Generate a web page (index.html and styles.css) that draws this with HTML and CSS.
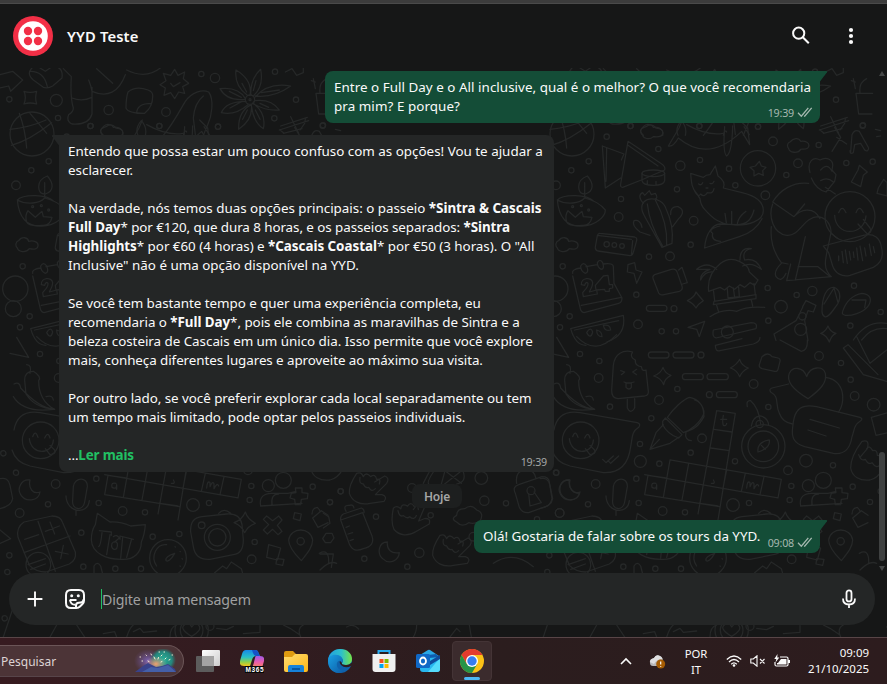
FILE: index.html
```
<!DOCTYPE html>
<html lang="pt">
<head>
<meta charset="utf-8">
<title>YYD Teste</title>
<link rel="stylesheet" href="styles.css">
</head>
<body>
<div class="window-edge"></div>
<div class="app">
<svg class="doodles" width="887" height="569" viewBox="0 68 887 569" aria-hidden="true">
  <defs>
    <g id="upper" transform="translate(550 120) scale(.33333)">
      <circle cx="66" cy="42" r="66"/><path d="M0 28Q60 22 108 0M4 76Q60 60 125 8M50 84Q46 30 28 -20M110 40Q86 10 60 -20"/>
      <path d="M157 78l65 24-8 18M157 78l9 126 46-30M170 84l-2 100M234 64l98 66q16 10 12 20l-70 30-56 22q-8 0-6-10zM234 76l90 62"/>
      <ellipse cx="310" cy="160" rx="34" ry="10"/><path d="M276 160v22q2 14 34 14t34-14v-22M292 182v10M318 184v10"/>
      <path d="M280 20c10-12 26-6 30 2 16-2 32 6 28 20-4 12-22 8-28 8-12 12-30 4-32-4-10-8-6-20 2-26zM720 66c10-12 26-14 32-2 14-2 28 4 24 16-4 12-20 6-24 8-8 14-34 10-36-2-6-8-4-18 4-20zM26 362c10-14 28-10 30 2 14-4 30 2 28 14s-16 10-26 8c-12 16-34 8-36-2-8-8-4-20 4-22z"/>
      <path d="M22 240C40 222 110 222 132 244M22 240C26 290 50 322 96 318 136 318 166 290 166 270 150 250 130 240 104 234M22 240C50 256 90 250 104 234M86 200C86 186 96 174 112 168 132 190 132 214 106 222 92 222 86 212 86 200zM104 188v46M50 306q-6-20 4-34l22 20 20-18 4 16 26 2q-6 26-30 24-40 4-46-10z"/><circle cx="68" cy="260" r="3"/><circle cx="94" cy="257" r="3"/><circle cx="116" cy="270" r="3"/>
      <path d="M150 340l104 11q8 2 6 10l-10 36q-2 10-10 10l-96-14q-9-2-8-12l6-34q2-8 8-7zM142 346l102 12M248 362l-4 44"/><circle cx="170" cy="373" r="8"/><circle cx="193" cy="375" r="7"/><circle cx="216" cy="378" r="7"/>
      <path d="M276 270c-8-44 60-44 72-4q24 50 18 104l-30 12-46-82q-12-20-14-30zM292 252q6 60 46 126M316 240q38 70 34 136M280 250q-20-24-2-32l6 8 14-14 6 12 12-4q10 14-2 18M362 284q-2-26 22-24 26 12 2 36l-18 24M276 322q-4-24-24-20-8 14 18 34l30 10"/>
      <path d="M422 160C424 190 426 206 440 220L450 236Q452 256 464 268C490 298 510 310 540 314 600 320 640 300 640 272 640 240 610 226 576 218L520 204Q528 184 504 168L496 138 480 164Q468 164 460 172zM434 214q10 20 18 8 10 12 20-4 18 4 20-12M464 384C466 340 490 312 510 312L560 314C590 314 604 300 612 270M464 384l104-34C600 340 624 320 636 296M510 318q-40 10-22 22-6 22 24 24M545 274v36M562 310q4-20 26-36M525 280l4 28"/><path d="M446 192q8 6 12-4M480 190q8 4 12-6M468 204h6"/>
      <path d="M355 78l32-54 10-24M355 78q14 4 30-24 90 76 190-20l24 40-6-50-24-24M524 20q-6 80 6 88 16-10 18-90M410 14q60 34 110 26"/>
      <circle cx="624" cy="145" r="53"/><path d="M628 124l6 14 14 4-10 10 2 14-14-6-14 8v-16l-12-10 16-4z"/>
      <path d="M812 18l80-26M820 40l56-14M846 94l26-42-18-30M860 52l30 20M902 96l4-52q8-18 22-10l28 50q-2 14-12 6l-12-20-18 4-4 24q-10 6-10-6z"/>
      <path d="M780 158C770 124 790 108 810 120 830 108 850 120 848 138L846 150 858 164 854 184 828 216Q798 208 784 174M812 150q20-24 34 4M812 182q20-12 38 4M776 190C730 184 690 210 668 246L732 290C750 270 790 256 810 296M668 252C654 290 670 340 710 346 750 350 760 290 806 290 836 296 846 324 842 342 830 410 812 440 844 470L710 482 722 432M664 320q-6 60 30 108l20 4M732 290l32-38M766 350l-30 130M744 440h60l34 28M856 222l-30-20M864 356l-22-18M694 430q-24 24-16 40 16 20 30-10"/>
      <circle cx="900" cy="290" r="75"/><path d="M854 286C856 350 942 350 948 288M866 278q10-26 22 0M918 278q10-26 22 0M924 312l28 30q16-4 8-18l-20-26"/>
      <path d="M820 378l120-32C974 338 990 356 994 380 1002 410 994 430 970 442L900 466C876 472 856 460 848 438L836 398zM866 408v14M876 394l4 34M886 390l6 40M898 394l4 26M910 396l2 16M920 384l4 36M930 378l8 44M944 384l4 24M958 372l6 34M970 380l4 18"/>
      <path d="M68 460q-4-12 24-16M108 440l34-6M160 432q30-4 30 8l2 50 24 44q0 14-10 16l-104 28q-10-2-12-16l-22-94M94 556l120-24M92 438q8-14 18 0 8 20-4 22-14-6-14-22zM142 428q8-14 16 0 6 20-4 20-12-6-12-20z"/><path d="M94 494C92 472 126 470 128 488 128 500 122 506 118 516L140 510 142 522 100 530 98 518C104 510 116 500 114 490 110 484 106 490 104 496zM136 496L160 468 174 466 178 494 188 494 188 504 178 506 178 514 166 514 164 508 138 510z"/>
      <path d="M234 434l20-6 4 22 18 6-16 34-8-30-20-4zM314 464l50-16q14-4 18 10l14 40q4 12-8 16l-46 10q-14 4-18-10l-14-36q-4-10 4-14zM386 450l10-8 16 46-14 4M438 516q14 18 22 26-16 10-22 22-8-14-26-22 22-10 26-26z"/>
      <path d="M512 430q26-20 56-6q30 14 30 32l26 24-10 16-14-8-16 14-14-8-16 14-16-10-14 12-14-8-34 12q-6-50 36-84zM490 508l4 34M612 490l4 34M492 544l126-20v12l-128 18zM500 556l6 20M604 540l4 18M480 590q40-26 80-16 30-16 84-12M532 506l2 28 34-4-2-28M550 504l4 28M570 420q0-40 34-34-30 6-20 34 34-8 50 28-30-24-56-10M500 448q-30-26-60 0 20 0 40 0-30 10-28 32 12-26 36-24"/>
      <path d="M758 560l10-18 30 14-8 20-16-4-10 30 10 60M758 562l-20 40-66 40 6 20"/><circle cx="752" cy="628" r="18"/><circle cx="757" cy="589" r="11"/>
      <path d="M816 574C816 530 830 500 852 502 870 508 874 530 864 550 850 570 836 594 824 590 816 586 816 580 816 574zM822 552l30-48 12 44M878 574C888 544 910 524 936 520 962 522 966 540 956 556 940 580 900 588 886 586 876 584 876 580 878 574zM906 540h42l-4 22"/>
      <rect x="289" y="556" width="62" height="18" rx="9"/><path d="M62 626l158-40q10 60-50 80M62 626q14 50 46 50M74 630l132-28M110 638q12-20 18-2-6 24-18 2zM140 630q16 4 16 20-16 0-16-20zM160 616q20-4 22 14-18 6-22-14z"/>
      <path d="M490 630l114-22q20 0 14 18l-120 28q-12-2-8-24zM414 622l50-18-16 46-8-22zM812 640q14-4 22-22 6 18 24 22-14 6-20 26-8-20-26-26zM910 660q40-60 100-50M935 660q30-40 76-34"/><circle cx="532" cy="636" r="18"/>
      <path d="M904 186l20-36 4-14 24 20-12 10-8 34zM985 204l16-26 10 10v40l-30-8zM976 28l16 4M980 50l12-2"/>
      <g><circle cx="170" cy="50" r="8"/><circle cx="116" cy="124" r="8"/><circle cx="64" cy="151" r="8"/><circle cx="18" cy="196" r="13"/><circle cx="213" cy="237" r="8"/><circle cx="206" cy="291" r="13"/><circle cx="242" cy="18" r="8"/><circle cx="325" cy="87" r="8"/><circle cx="391" cy="137" r="14"/><circle cx="450" cy="120" r="8"/><circle cx="448" cy="18" r="8"/><circle cx="381" cy="208" r="8"/><circle cx="431" cy="302" r="13"/><circle cx="422" cy="374" r="8"/><circle cx="297" cy="410" r="8"/><circle cx="360" cy="409" r="13"/><circle cx="38" cy="439" r="8"/><circle cx="16" cy="506" r="38"/><circle cx="10" cy="566" r="24"/><circle cx="537" cy="146" r="8"/><circle cx="556" cy="196" r="8"/><circle cx="646" cy="226" r="13"/><circle cx="624" cy="20" r="8"/><circle cx="669" cy="64" r="13"/><circle cx="806" cy="75" r="8"/><circle cx="744" cy="130" r="13"/><circle cx="709" cy="165" r="8"/><circle cx="889" cy="129" r="8"/><circle cx="968" cy="125" r="8"/><circle cx="939" cy="16" r="8"/><circle cx="259" cy="524" r="8"/><circle cx="372" cy="566" r="9"/><circle cx="264" cy="613" r="13"/><circle cx="335" cy="634" r="8"/><circle cx="378" cy="634" r="8"/><circle cx="59" cy="589" r="8"/><circle cx="30" cy="622" r="8"/><circle cx="653" cy="504" r="8"/><circle cx="693" cy="560" r="19"/><circle cx="740" cy="525" r="8"/><circle cx="787" cy="513" r="14"/><circle cx="655" cy="602" r="8"/><circle cx="912" cy="497" r="8"/><circle cx="992" cy="576" r="8"/><circle cx="901" cy="617" r="8"/></g>
    </g>
    <g id="lower" transform="translate(550 340) scale(.33333)">
      <path d="M185 150L190 76C194 40 220 28 248 36 238 50 250 56 256 60 254 76 268 80 274 80 276 94 284 92 288 90L295 154Q296 166 284 168L204 176Q184 174 185 150zM232 178v26q10 20 22 0v-28M212 92l12 4-10 8M260 88l-12 8 12 8M222 126q14 6 30 0M228 128v14q10 10 16 0v-14"/>
      <rect x="295" y="36" width="62" height="18" rx="9"/><rect x="369" y="36" width="63" height="18" rx="9"/><rect x="397" y="101" width="63" height="18" rx="9"/><rect x="471" y="101" width="64" height="18" rx="9"/><rect x="499" y="155" width="63" height="18" rx="9"/>
      <path d="M339 82q6 18 24 24-20 10-22 28-8-20-30-26 22-8 28-26zM569 58q6 20 26 26-20 10-26 26-8-20-28-26 20-10 28-26zM636 50q18-16 30 0l18 4q8 2 6 10l-6 24q-2 8-10 6l-38-8q-10-4-8-12z"/>
      <path d="M774 176C730 150 708 124 718 100 728 78 760 80 770 110 782 76 820 78 826 100 832 128 810 150 774 176zM716 132l-50 12q-10 4-4 12C690 172 674 190 688 220 696 242 710 250 728 252M826 112C860 116 876 140 878 166 880 190 874 204 866 216"/>
      <path d="M740 216C752 196 774 196 800 200L930 232Q940 236 932 242C910 256 914 270 906 290 900 330 882 344 850 340L764 320C730 310 724 290 728 262 730 240 734 224 740 216zM780 238l88 26M774 270l54 18"/>
      <path d="M12 270C20 226 50 212 90 218L262 248Q274 252 266 262C244 276 248 290 242 320 236 370 210 400 160 398L60 378C26 370 12 350 6 330"/><circle cx="92" cy="301" r="55"/><path d="M58 296C64 348 128 344 130 300M68 290q8-22 16 2M104 294q10-22 16 0M106 326l14 18q20-2 14-14l-14-14M158 358l10 10 22-20M174 362l8 8 24-22"/>
      <path d="M50 74q16 0 10 26M44 120q0-26 26-26 26 16 16 28 0 60 48 86-60-4-86-46l-4-40M12 132q18-8 20 12 60 64 100 62M10 170q30 50 120 38M108 170q20-6 22 10"/>
      <path d="M352 232C370 206 400 178 418 172 446 176 462 200 462 220 450 250 420 272 400 278zM338 244l8-10 50 50-10 10q-34-12-48-40zM340 254l-22 24-18 50 60-18 26-18M302 326l26-28M434 180C464 190 460 220 462 230 440 270 420 270 408 276 404 292 412 302 424 302"/><circle cx="456" cy="295" r="13"/>
      <path d="M500 212l56 8-52 320M500 212l-56 310M492 268l54 8M482 324l56 8M360 360l334 58-10 56-400-70M294 406l-10 58 224 36M360 360l-20 112M416 370l-20 110M530 390l-12 60M586 400l-12 54M642 410l-12 54M294 406l54 8M450 490l54 8"/>
      <path d="M512 238h18M520 226q-4 20 0 30 8 4 10-6M318 430q-16-4-12 12 14 8 14-8v14M490 420q8 12-6 10M590 444q2-24 10-16v12q8-20 12-8v14q10-20 14-8"/>
      <circle cx="640" cy="319" r="65"/><circle cx="640" cy="319" r="46"/><path d="M624 336q-4-30 34-36 4 24-34 36zM634 316l12 12M604 258q4-28 26-30 24 4 26 28M592 200q-4-20 10-18 24 20 30 70"/><circle cx="629" cy="252" r="11"/>
      <path d="M936 304C916 330 902 356 902 384 906 410 930 424 960 420 980 416 990 402 998 388M936 304Q960 296 952 326L930 352M950 326q8-12 18 6 14-4 14 14 14 0 8 18M926 344q6 20 20 14 8 18 20 10 12 18 24 8M880 24l60 80 70 20M880 24l14-10 90 90M920-10l40 80 50-40M964 232l50-14M964 232l14 54 36-8"/>
      <path d="M60 420C34 416 20 446 32 464 46 488 86 484 90 456 70 464 54 446 60 420zM190 440C194 410 234 410 232 440L224 486C220 514 184 512 188 480zM168 468C170 520 234 526 238 482M198 512v14"/>
      <circle cx="820" cy="421" r="24"/><circle cx="775" cy="437" r="18"/><path d="M752 498C746 470 764 460 784 460H834l24-6M752 498l124-8M786 494q-4-32 20-32M856 444h20v14l18 2-2 16-18 2-2 16h-16l-2-16-14-4 4-14 14-2z"/>
      <path d="M496 16l80-20M496 16q0 20 14 16l100-20q20-6 20-20M690 0l64 34q20-2 18-34M0 40l56 12-36-60M80-10q56 60 120-6"/>
      <g><circle cx="90" cy="42" r="8"/><circle cx="148" cy="63" r="8"/><circle cx="146" cy="114" r="13"/><circle cx="180" cy="200" r="8"/><circle cx="304" cy="235" r="8"/><circle cx="327" cy="180" r="13"/><circle cx="382" cy="147" r="8"/><circle cx="453" cy="45" r="9"/><circle cx="478" cy="164" r="9"/><circle cx="611" cy="132" r="13"/><circle cx="655" cy="201" r="8"/><circle cx="807" cy="48" r="13"/><circle cx="873" cy="69" r="8"/><circle cx="902" cy="119" r="8"/><circle cx="914" cy="168" r="13"/><circle cx="971" cy="194" r="19"/><circle cx="270" cy="312" r="8"/><circle cx="271" cy="364" r="18"/><circle cx="328" cy="371" r="8"/><circle cx="422" cy="338" r="8"/><circle cx="555" cy="364" r="8"/><circle cx="714" cy="391" r="13"/><circle cx="768" cy="362" r="19"/><circle cx="849" cy="376" r="8"/><circle cx="908" cy="440" r="8"/><circle cx="724" cy="438" r="8"/><circle cx="719" cy="480" r="8"/><circle cx="960" cy="486" r="8"/><circle cx="992" cy="454" r="8"/><circle cx="18" cy="398" r="8"/><circle cx="137" cy="432" r="13"/><circle cx="259" cy="416" r="8"/><circle cx="114" cy="493" r="8"/><circle cx="266" cy="489" r="8"/><circle cx="29" cy="519" r="13"/><circle cx="338" cy="513" r="13"/><circle cx="405" cy="517" r="8"/><circle cx="549" cy="495" r="19"/><circle cx="597" cy="489" r="8"/></g>
    </g>
    <g id="bottom" transform="translate(0 420) scale(.33333)">
      <path d="M72 306l84-18q26 0 32 20l38 88q4 24-18 36l-70 24q-30 0-50-20l-34-84q-6-30 18-46zM114 304l52 150M72 398l138-50M74 358l42-14M136 334l42-16M150 306l14 36M166 394l38 8M190 376l-8 40M84 434l52-18M92 448l44-16"/><circle cx="115" cy="434" r="37"/>
      <path d="M292 280l38 26Q360 304 392 318L436 314Q434 344 424 366C424 400 400 418 370 418 320 420 276 400 274 360 274 340 278 326 286 314zM298 332l36 4v10M400 358l-40-10v10M306 338q-4 40-10 42M330 344l-10 60M368 352l-6 62M394 360l-14 52M340 350q10-8 18 4l-14 12M336 370q10-10 16 0 2 20-10 18-10-4-6-18z"/>
      <circle cx="504" cy="414" r="55"/><path d="M470 438C450 410 470 370 500 374M524 400q-30 10-26 22 10 6 26-22M525 380l1 1M540 394l1 1M546 416l1 1M540 438l1 1"/>
      <path d="M572 336C570 304 584 292 606 290L680 282C708 280 722 290 726 314L730 360C730 386 720 402 700 404L630 418C600 420 584 406 580 380zM656 280q16-18 36 0M736 276q6 20 30 34-22 8-32 28-8-20-32-30 24-8 34-32z"/><circle cx="652" cy="352" r="39"/><circle cx="652" cy="352" r="26"/><circle cx="605" cy="316" r="10"/>
      <path d="M800 288l18 14 18-14 10 12-14 16 14 18-12 10-16-16-16 14-12-12 16-16-16-16zM806 374l36 10-10 36-32-8zM830 416l22 2-4 18-20-4zM884 278l20 4-4 20-20-6zM938 294l26-22 20 14M938 294l16 28 30-14M936 282q0-18 16-20 10 10 8 14M904 422C882 400 866 378 866 360 872 320 932 320 938 360 938 382 920 402 904 422zM282 462v-24q10-16 20 0l6 24M644 458l24-20 12 8 14-20 30 20 4 14M958 400q30-16 28 30M960 450q30-30 50-20"/><circle cx="902" cy="364" r="11"/>
      <path d="M0 176q24-6 30 20l8 40q-4 24-40 30M0 330l32 26-32 14"/>
      <g><circle cx="10" cy="100" r="8"/><circle cx="28" cy="406" r="8"/><circle cx="22" cy="456" r="8"/><circle cx="244" cy="338" r="8"/><circle cx="458" cy="350" r="8"/><circle cx="538" cy="342" r="8"/><circle cx="250" cy="440" r="8"/><circle cx="346" cy="446" r="8"/><circle cx="423" cy="446" r="8"/><circle cx="764" cy="366" r="8"/><circle cx="755" cy="418" r="13"/></g>
    </g>
    <g id="top" transform="translate(0 60) scale(.33333)">
      <path d="M0 44l38-10 30 26-36 34-6-16-26 6M100 20q-24 20 0 40l30 22q14 4 28-4l28-24q4-30-20-34M92 34q40 0 50 46M120 24l16 10 20-14M72 94q18 6 38 0-6 18 0 38-20-6-38 0 8-20 0-38zM190 26l24 24q-4 60 6 94 0 12-14 20-8 20 10 28 50 4 60-30v-80M216 114q30 12 60-2M266 60q8 20 10 34 70 30 100-50M290 26l48 44M380 30q60 30 106-10M384 96q24-20 60-6 16 6 14 20 0 30-24 50-50 0-56-16 0-30 6-48zM410 160q0-30 44-30"/>
      <path d="M524 28l10 18 20-10-4 20 16 14-18 10 6 20-18-4-12 20-12-18-20 8 4-22-16-10 18-12-8-22 22 6zM512 70l8 10 20-12M490 226C520 190 540 150 556 124 576 96 606 88 626 96 644 120 634 170 624 192L610 226M610 108q-26 20-30 66l6 50M550 226q6-20 10-10M612 200l16 24"/>
      <circle cx="750" cy="119" r="14"/><circle cx="750" cy="119" r="3"/><path d="M742 106q-40-30-34-76 50 30 42 76zM752 104q0-50 30-76 10 50-22 80zM764 112q40-46 108-34-50 36-106 30M764 122q50-6 74 28-40 4-80-20zM754 134q-40 20-38 74 44-30 38-74M760 130q40 30 30 76-30-20-36-70M738 124q-60 0-74 34 40 10 80-24M736 116q-20-36-76-30 20 38 76 32M726 70l14 26M768 62l-8 30M784 98l54-8M780 130l26 12M742 150l-14 28M766 150l14 28M726 124l-36 20M724 112l-36-18"/>
      <path d="M838 210l88-28M850 218q-10-6-10-10M872 170l24 50M900 210l14-20 2-14M856 36l20-10 14 20 20-8v-14M948 100h50M948 100l8 62h40M960 98q-4-30 20-42M934 62l12 4M940 56l6 30M310 226q-20-18 8-26 16-12 30 4 24 0 20 22M414 226q-10-20 10-44 18 20 12 44"/>
      <g><circle cx="28" cy="118" r="8"/><circle cx="169" cy="121" r="18"/><circle cx="174" cy="174" r="8"/><circle cx="326" cy="150" r="14"/><circle cx="271" cy="198" r="8"/><circle cx="478" cy="198" r="8"/><circle cx="498" cy="156" r="13"/><circle cx="604" cy="42" r="8"/><circle cx="645" cy="54" r="14"/><circle cx="654" cy="200" r="8"/><circle cx="825" cy="35" r="8"/><circle cx="823" cy="175" r="8"/><circle cx="888" cy="119" r="8"/><circle cx="968" cy="197" r="8"/></g>
    </g>
    <g id="middle" transform="translate(320 440) scale(.33333)">
      <path id="hand" d="M110 100C94 124 86 140 88 160 96 184 120 196 150 190L192 184Q204 170 186 164H166L200 130Q210 114 194 108L164 126M110 100q14-6 20 10 8-16 22 0 14-10 18 8 14-4 8 14M120 112q-4 20 10 20 6 14 16 10 8 16 20 4"/>
      <use href="#hand" transform="rotate(-22 140 140) translate(80 130)"/><use href="#hand" transform="translate(250 186)"/>
      <path d="M62 240l66-22 28 70q10 30-26 38-30 14-42-14zM62 240q-2-12 8-18l54-18q10 4 8 14M78 214q-10-20 10-18 12-4 14 8M78 262l10-4M84 282l14-4M90 302l10-4M202 306C176 306 170 340 188 356 208 376 236 362 238 338 214 342 200 330 202 306zM748 120C722 120 714 144 724 164 738 186 770 184 778 160 758 160 744 142 748 120z"/>
      <path d="M410 226q0-20 24-20 20-16 36 4 24 8 10 34-20 10-34 4-20 16-36-2-20-10 0-20zM586 160q-10-20 10-26l70-24q20 0 22 16l8 50q-4 20-20 24l-50 18q-20 2-28-16zM590 130q-6-40 30-40 24 0 28 26M626 160l4 38 34-10-22-32"/><circle cx="633" cy="152" r="12"/>
      <path d="M310 130q20-40 22-40M340 96q-20 30-14 36M364 132l10-36M430 96q10 30-20 36M380 96l44 34M420 96l-46 36M0 342l40 0-6 40M10 220l16 10 4 20-20 14M520 370q60-40 120 10M8 296l10-16h18l6 14-10 14h-16z"/>
      <g><circle cx="62" cy="154" r="8"/><circle cx="30" cy="187" r="8"/><circle cx="168" cy="230" r="8"/><circle cx="133" cy="356" r="8"/><circle cx="276" cy="144" r="13"/><circle cx="484" cy="114" r="19"/><circle cx="493" cy="182" r="14"/><circle cx="558" cy="190" r="8"/><circle cx="332" cy="226" r="8"/><circle cx="298" cy="338" r="14"/><circle cx="262" cy="380" r="8"/><circle cx="709" cy="98" r="8"/><circle cx="719" cy="219" r="13"/><circle cx="651" cy="238" r="8"/><circle cx="460" cy="290" r="13"/></g>
    </g>
    <g id="footer" transform="translate(0 565) scale(.33333)">
      <path d="M10 216q20-60 30-90M150 216l20-36M230 180l24 36M310 206l34-6 6 16M380 216q10-30 20-36M400 200l20-10 10 12 40-4M510 216q0-30 20-36M650 190l30 4 20-10M730 206l50-4v-20M850 180l20 10 30 20M910 180q-20 10-8 36M1040 186q20-12 36 6M1250 180q0 20-10 36M1350 216l20-26 10 10M1408 180l6 36"/><circle cx="575" cy="196" r="50"/><circle cx="575" cy="196" r="34"/><path d="M575 214q-40-24-20-36 14-6 20 8 12-16 22-4 10 14-22 32"/><circle cx="630" cy="184" r="12"/><circle cx="14" cy="160" r="8"/>
    </g>
  </defs>
  <g class="ink">
    <use href="#upper"/><use href="#upper" x="-540"/>
    <use href="#lower"/><use href="#lower" x="-540"/>
    <use href="#bottom"/><use href="#bottom" x="540"/>
    <use href="#top"/><use href="#top" x="540"/>
    <use href="#middle"/>
    <use href="#footer"/><use href="#footer" x="540"/>
  </g>
</svg>

<header class="chat-header">
  <svg class="avatar" viewBox="0 0 40 40"><circle cx="20" cy="20" r="20" fill="#f22f46"/><circle cx="20" cy="20" r="14.8" fill="#fff"/><g fill="#f22f46"><circle cx="15" cy="15" r="4.2"/><circle cx="25" cy="15" r="4.2"/><circle cx="15" cy="25" r="4.2"/><circle cx="25" cy="25" r="4.2"/></g></svg>
  <h1 class="contact">YYD Teste</h1>
  <svg class="search" viewBox="0 0 20 20"><circle cx="7.7" cy="7.2" r="5.6"/><path d="M11.8 11.3l6 6"/></svg>
  <svg class="more" viewBox="0 0 6 18"><circle cx="3" cy="3" r="2.1"/><circle cx="3" cy="9" r="2.1"/><circle cx="3" cy="15" r="2.1"/></svg>
</header>

<main class="thread">
  <article class="bubble out first">
    <svg class="tail" viewBox="0 0 8 13"><path d="M0 0h6.2q1.6 0 .8 1.2L0 10.5z"/></svg>
    <p><span class="line a1">Entre o Full Day e o All inclusive, qual é o melhor? O que você recomendaria</span><span class="line a2">pra mim? E porque?</span></p>
    <div class="meta">19:39 <svg class="checks" viewBox="0 0 16 12"><path d="M1 6.8l3.3 3.4 7-8.4M7.1 9.8l.6.4 7-8.4"/></svg></div>
  </article>
  <article class="bubble in">
    <svg class="tail" viewBox="0 0 8 13"><path d="M8 0H1.8Q.2 0 1 1.2L8 10.5z"/></svg>
    <p><span class="line b1">Entendo que possa estar um pouco confuso com as opções! Vou te ajudar a</span><span class="line b2">esclarecer.</span></p>
    <p><span class="line b3">Na verdade, nós temos duas opções principais: o passeio <b>*Sintra &amp; Cascais</b></span><span class="line b4"><b>Full Day</b>* por €120, que dura 8 horas, e os passeios separados: <b>*Sintra</b></span><span class="line b5"><b>Highlights</b>* por €60 (4 horas) e <b>*Cascais Coastal</b>* por €50 (3 horas). O "All</span><span class="line b6">Inclusive" não é uma opção disponível na YYD.</span></p>
    <p><span class="line b7">Se você tem bastante tempo e quer uma experiência completa, eu</span><span class="line b8">recomendaria o <b>*Full Day</b>*, pois ele combina as maravilhas de Sintra e a</span><span class="line b9">beleza costeira de Cascais em um único dia. Isso permite que você explore</span><span class="line b10">mais, conheça diferentes lugares e aproveite ao máximo sua visita.</span></p>
    <p><span class="line b11">Por outro lado, se você preferir explorar cada local separadamente ou tem</span><span class="line b12">um tempo mais limitado, pode optar pelos passeios individuais.</span></p>
    <p><span class="line b13">...<b class="more-link">Ler mais</b></span></p>
    <div class="meta">19:39</div>
  </article>
  <div class="day">Hoje</div>
  <article class="bubble out second">
    <svg class="tail" viewBox="0 0 8 13"><path d="M0 0h6.2q1.6 0 .8 1.2L0 10.5z"/></svg>
    <p><span class="line c1">Olá! Gostaria de falar sobre os tours da YYD.</span></p>
    <div class="meta">09:08 <svg class="checks" viewBox="0 0 16 12"><path d="M1 6.8l3.3 3.4 7-8.4M7.1 9.8l.6.4 7-8.4"/></svg></div>
  </article>
  <div class="scrollbar"><i class="up"></i><i class="thumb"></i><i class="down"></i></div>
</main>

<footer class="composer">
  <svg class="plus" viewBox="0 0 16 16"><path d="M8 .6v14.8M.6 8h14.8"/></svg>
  <svg class="sticker" viewBox="0 0 22 22"><path d="M7 2h8q5 0 5 5v5.500q0 2-1.500 3.500l-2.500 2.500Q14.500 20 12.500 20H7q-5 0-5-5V7q0-5 5-5z"/><path d="M5.700 12h6.800M6 12q.6 4.800 5.500 4.800"/><path d="M12 19.500v-2q0-2.800 2.800-2.800 4.700 0 4.700-3.500"/><circle class="eye" cx="7.700" cy="7.800" r="1.500"/><circle class="eye" cx="14.300" cy="7.800" r="1.500"/></svg>
  <div class="field">Digite uma mensagem</div>
  <svg class="mic" viewBox="0 0 16 20"><rect x="5.500" y="1.400" width="5" height="11" rx="2.500"/><path d="M2 9.500q0 6 6 6t6-6M8 15.500V19"/></svg>
</footer>
</div>

<nav class="taskbar">
  <div class="searchbox"><span>Pesquisar</span>
    <svg class="scene" viewBox="0 0 42 24"><defs><radialGradient id="ga"><stop offset="0" stop-color="#7c63b5"/><stop offset="1" stop-color="#6a5090" stop-opacity="0"/></radialGradient><radialGradient id="gb"><stop offset="0" stop-color="#2ab39a"/><stop offset=".7" stop-color="#25867c"/><stop offset="1" stop-color="#2a7570" stop-opacity="0"/></radialGradient><radialGradient id="gc"><stop offset="0" stop-color="#f0a070"/><stop offset="1" stop-color="#c89a88" stop-opacity="0"/></radialGradient></defs><ellipse cx="14" cy="12" rx="14" ry="12" fill="url(#ga)"/><ellipse cx="29" cy="11" rx="13" ry="12" fill="url(#gb)"/><ellipse cx="22" cy="15" rx="11" ry="8" fill="url(#gc)"/><path d="M1 23l8-6 5-3 4 2 4 2 6-1 6-2 7 5 1 3z" fill="#39428a"/><path d="M8 23l9-5 7 1 10-3 8 7z" fill="#445fa8"/><path d="M6 8h.5M8 12h.5M12 6l.5.500M17 5l.5 1M20 8l1 2M24 10l.5-1.500M27 7l1-1M31 10l1-1M35 11l1-.5M14 12l1 .5M27 13l1-.5M25 3h.5M30 3h.5M38 6h.5" stroke="#fff4d8" stroke-width="1" stroke-linecap="round"/></svg>
  </div>
  <div class="apps">
    <div class="slot"><svg viewBox="0 0 24 24"><defs><linearGradient id="tv" x2="1" y2="1"><stop stop-color="#fff"/><stop offset="1" stop-color="#ccc"/></linearGradient></defs><rect x="6" y="1" width="18" height="16" rx="1" fill="url(#tv)"/><rect x="0" y="7" width="18" height="16" rx="1" fill="#5c5c5c"/><path d="M6 7h12v10H6z" fill="#a3a3a3"/></svg></div>
    <div class="slot"><svg viewBox="0 0 24 24"><defs><linearGradient id="c1" x2="0" y2="1"><stop stop-color="#1688e8"/><stop offset=".45" stop-color="#28bfc7"/><stop offset=".75" stop-color="#8ed04a"/><stop offset="1" stop-color="#f3c51b"/></linearGradient><linearGradient id="c2" x2="0" y2="1"><stop stop-color="#a05be8"/><stop offset=".5" stop-color="#e95cae"/><stop offset="1" stop-color="#fb8954"/></linearGradient></defs><path d="M6 1h9q3 0 3.500 3L20 7h-4q-3 0-4 4l-2 6H4q-5 0-4-5l2-7q1-4 4-4z" fill="url(#c1)"/><path d="M12 1h3q3 0 3.500 3L20 7h-4q-2 0-3-3z" fill="#1553c7"/><path d="M16 7h4q5 0 4 5l-2 7H11q2-1 2.500-4L15 9q.3-2 1-2z" fill="url(#c2)"/><rect x="5" y="17" width="19" height="7" fill="#070707"/><text class="tag" x="5.600" y="23.200" textLength="18">M365</text></svg></div>
    <div class="slot"><svg viewBox="0 0 24 24"><defs><linearGradient id="fo" x2="1" y2="1"><stop stop-color="#ffdc70"/><stop offset="1" stop-color="#fdb818"/></linearGradient></defs><path d="M0 4q0-2 2-2h7l3 3h10v6H0z" fill="#df9b10"/><path d="M0 8h8l3-3h11q2 0 2 2v14q0 2-2 2H2q-2 0-2-2z" fill="url(#fo)"/><path d="M4 23v-5q0-2 2-2h12q2 0 2 2v5z" fill="#1682d9"/><path d="M8 19h8v2H8z" fill="#0756a0"/></svg></div>
    <div class="slot"><svg viewBox="0 0 24 24"><defs><linearGradient id="e1" x2="1"><stop stop-color="#249fdc"/><stop offset=".55" stop-color="#2cc0cc"/><stop offset="1" stop-color="#76e447"/></linearGradient><linearGradient id="e2" x2="1" y2="1"><stop stop-color="#1aa0e2"/><stop offset="1" stop-color="#0c59a4"/></linearGradient></defs><circle cx="12" cy="12" r="12" fill="#0f62ac"/><path d="M0 11C1 4 6 0 12 0c8 0 12 5 12 10 0 4-3 6-6 6-4 0-5-1-4-2 2-2 1-6-4-7-5 0-9 1-10 4z" fill="url(#e1)"/><path d="M0 12c0-5 5-7 9-6 4 0 7 4 5 8-1-3-4-3-5 0-1 4 2 8 8 8-8 5-17 0-17-10z" fill="url(#e2)"/><path d="M14 14q-1 2 4 2 3 0 6-2.500 1 1.500-1 3.500-6 3-10-1-2-2-1-4z" fill="#2d1d1f"/></svg></div>
    <div class="slot"><svg viewBox="0 0 24 24"><path d="M6.500 6V2h11v4" fill="none" stroke="#27a9ee" stroke-width="2"/><path d="M.5 5h23v15q0 3-3 3h-17q-3 0-3-3z" fill="#f0f0f0"/><path d="M7.500 10H11.500v4H7.500z" fill="#f25022"/><path d="M12.500 10h4v4h-4z" fill="#7fba00"/><path d="M7.500 15h4v4h-4z" fill="#00a4ef"/><path d="M12.500 15h4v4h-4z" fill="#ffb900"/></svg></div>
    <div class="slot"><svg viewBox="0 0 24 24"><path d="M4 6l8-5q1-.6 2 0l9 6v8H4z" fill="#2aa7e6"/><path d="M12 6l8-1 3 3-10 8z" fill="#0f5cae"/><path d="M4 9h9l11-1v12q0 3-3 3H7q-3 0-3-3z" fill="#28b7ef"/><path d="M24 9v11q0 3-3 3h-9z" fill="#55dcfb"/><path d="M14 12l10-6v4l-10 6z" fill="#104a9a"/><rect y="5" width="14" height="14" rx="1.500" fill="#1068c6"/><ellipse cx="7" cy="12" rx="3" ry="3.500" fill="none" stroke="#fff" stroke-width="1.800"/></svg></div>
    <div class="slot active"><svg viewBox="0 0 24 24"><circle cx="12" cy="12" r="12" fill="#fbc116"/><path d="M1.600 6A12 12 0 0 1 22.400 6H12v6l-5.200 3z" fill="#e33b2e"/><path d="M1.600 6A12 12 0 0 0 12 24l5.200-9L12 12l-5.200 3z" fill="#269447"/><circle cx="12" cy="12" r="6" fill="#fff"/><circle cx="12" cy="12" r="4.700" fill="#367df0"/></svg></div>
  </div>
  <div class="tray">
    <svg class="chev" viewBox="0 0 12 8"><path d="M1 7l5-5 5 5"/></svg>
    <svg class="cloud" viewBox="0 0 17 15"><path d="M1 9Q0 5 5 4q2-4 6-2 3 1 3 6l-3 4H4Q1 12 1 9z" fill="#b8b8ba"/><path d="M5 4q2-4 6-2 2 1 2.500 3Q8 5 5 10L1 8q0-3 4-4z" fill="#dedee0"/><circle cx="11.700" cy="10" r="4.500" fill="#a45b02"/><path d="M11.700 7.500v3M11.700 12v.8" stroke="#fff" stroke-width="1.200"/></svg>
    <div class="lang"><span>POR</span><span>IT</span></div>
    <svg class="wifi" viewBox="0 0 16 12"><path d="M.8 4.500q7.200-7 14.400 0M3 7q5-5 10 0M5.200 9.200q2.800-2.600 5.600 0"/><circle cx="8" cy="10.500" r="1.300"/></svg>
    <svg class="vol" viewBox="0 0 16 12"><path d="M.8 4h2.500L7 .8v10.400L3.300 8H.8zM10 4l4.500 4.500M14.500 4L10 8.500"/></svg>
    <svg class="batt" viewBox="0 0 17 14"><path d="M6 3h6.500q1.500 0 1.500 1.500v6q0 1.500-1.500 1.500h-10Q1 12 1 10.500V8"/><path class="fill" d="M3 10.500V9h1l3-4h5.500v5.500H3zM14 6h2v3h-2zM3.500 0L.3 5h2L1.500 8.500 5.300 3.500h-2z"/></svg>
    <div class="clock"><span class="hour">09:09</span><span class="date">21/10/2025</span></div>
  </div>
</nav>
</body>
</html>
```
FILE: styles.css
```
* { box-sizing: border-box; }
body {
  margin: 0;
  width: 887px;
  height: 684px;
  overflow: hidden;
  display: flex;
  flex-direction: column;
  background: #161717;
  color: #fafafa;
  font-family: "Noto Sans", "Open Sans", sans-serif;
}
svg { display: block; flex: none; }
p, h1 { margin: 0; }

.window-edge { height: 4px; background: #3c3c3c; border-bottom: 1px solid #4a4a4a; }
.app { position: relative; height: 633px; display: flex; flex-direction: column; }
.doodles { position: absolute; left: 0; top: 64px; }
.ink { fill: none; stroke: #262828; stroke-width: 3.8; stroke-linejoin: round; stroke-linecap: round; }

.chat-header { height: 64px; display: flex; align-items: center; padding: 0 33px 0 13px; background: #161717; }
.avatar { width: 40px; height: 40px; }
.contact { margin-left: 14px; flex: 1; font-size: 14.8px; font-weight: 600; letter-spacing: .1px; }
.search { width: 20px; height: 20px; fill: none; stroke: #fafafa; stroke-width: 2; margin-right: 37px; }
.more { width: 6px; height: 18px; fill: #fafafa; }

.thread { position: relative; height: 505px; padding: 3px 67px 0 59px; display: flex; flex-direction: column; align-items: flex-end; }
.bubble { position: relative; border-radius: 8px; font-size: 13.4px; line-height: 19px; }
.bubble .line { display: block; width: max-content; white-space: pre; }
.bubble .tail { position: absolute; top: 0; width: 8px; height: 13px; }
.a1 { letter-spacing: .035px; }
.a2 { letter-spacing: .07px; }
.b3 { letter-spacing: -.015px; }
.b4, .b10 { letter-spacing: -.07px; }
.b5, .b9 { letter-spacing: -.03px; }
.b7, .b8, .b12 { letter-spacing: -.048px; }
.b11 { letter-spacing: -.055px; }
.b13 { letter-spacing: -.15px; }
.out { background: #144d37; border-top-right-radius: 0; }
.out .tail { left: 100%; fill: #144d37; }
.in { background: #242626; border-top-left-radius: 0; }
.in .tail { right: 100%; fill: #242626; }
.first { width: 495px; height: 52px; padding: 6.500px 9px; }
.in { width: 495px; height: 337px; align-self: flex-start; margin-top: 12px; padding: 6.500px 9px; }
.in p + p { margin-top: 19px; }
.second { width: 346px; height: 33px; padding: 6.500px 9px; margin-top: 12px; }
.meta { position: absolute; right: 7px; bottom: 2px; display: flex; align-items: center; gap: 3px; font-size: 10.700px; line-height: 16px; letter-spacing: -.2px; color: #a6b8b0; }
.in .meta { color: #a5a6a6; }
.checks { width: 16px; height: 12px; margin-top: -2px; fill: none; stroke: #a6b8b0; stroke-width: 1.300; }
.more-link { color: #21c063; }
.day { margin: 12px 358px 0 0; width: 50px; height: 24px; border-radius: 8px; background: #1d1f1f; color: #a5a6a6; font-size: 12px; font-weight: 600; line-height: 25px; text-align: center; letter-spacing: -.2px; }

.scrollbar { position: absolute; right: 1px; top: 2px; width: 8px; height: 503px; }
.scrollbar i { position: absolute; }
.scrollbar .thumb { left: 1px; top: 382px; width: 6px; height: 109px; border-radius: 3px; background: #3f4141; }
.scrollbar .up, .scrollbar .down { left: 1px; border: 3px solid transparent; }
.scrollbar .up { top: -2px; border-bottom: 5px solid #454747; }
.scrollbar .down { top: 496px; border-top: 5px solid #454747; }

.composer { position: relative; margin: 0 12px 0 9px; height: 52px; border-radius: 26px; background: #242626; display: flex; align-items: center; padding: 0 18px; }
.plus { width: 16px; height: 16px; fill: none; stroke: #fafafa; stroke-width: 1.900; }
.sticker { width: 22px; height: 22px; margin-left: 21px; fill: none; stroke: #fafafa; stroke-width: 2; }
.eye { fill: #fafafa; stroke: none; }
.field { flex: 1; margin-left: 15px; border-left: 1px solid #21c063; height: 20px; line-height: 21px; color: #a0a1a1; font-size: 14.200px; letter-spacing: -.15px; }
.mic { width: 16px; height: 20px; fill: none; stroke: #fafafa; stroke-width: 1.800; }

.taskbar { height: 47px; border-top: 1px solid #584547; background: linear-gradient(90deg, #371b20, #321c20 30%, #2b1d1e 55%, #2d1c1e); display: flex; align-items: center; font-size: 11.500px; position: relative; }
.searchbox { width: 184px; height: 32px; border: 1px solid #6b5557; border-left: 0; border-bottom-color: #57454a; border-radius: 0 16px 16px 0; background: #4c3437; display: flex; align-items: center; justify-content: space-between; padding: 0 7px 0 1px; color: #dcd3d4; font-size: 12px; }
.scene { width: 42px; height: 24px; }
.apps { display: flex; gap: 4px; margin-left: 4px; }
.slot { width: 40px; height: 40px; display: flex; align-items: center; justify-content: center; position: relative; }
.slot svg { width: 24px; height: 24px; }
.active { background: #3b2b2d; border: 1px solid #443436; border-radius: 4px; }
.active::after { content: ""; position: absolute; left: 11px; bottom: 0; width: 16px; height: 3px; border-radius: 2px; background: #4cb8f5; }
.tag { font: bold 6.500px "Liberation Sans", sans-serif; fill: #fff; }
.tray { margin-left: auto; padding-right: 18px; display: flex; align-items: center; color: #fafafa; }
.chev { width: 12px; height: 8px; fill: none; stroke: #fafafa; stroke-width: 1.600; margin-right: 17px; }
.cloud { width: 17px; height: 15px; }
.lang { width: 30px; margin-left: 15px; display: flex; flex-direction: column; align-items: center; line-height: 16px; font-size: 11.300px; position: relative; top: .5px; }
.wifi { width: 16px; height: 12px; margin-left: 15px; fill: none; stroke: #fafafa; stroke-width: 1.300; }
.wifi circle { fill: #fafafa; stroke: none; }
.vol { width: 16px; height: 12px; margin-left: 8px; fill: none; stroke: #fafafa; stroke-width: 1.100; }
.batt { width: 17px; height: 14px; margin-left: 8px; fill: none; stroke: #fafafa; stroke-width: 1.200; }
.batt .fill { fill: #fafafa; stroke: none; }
.clock { width: 78px; display: flex; flex-direction: column; align-items: flex-end; line-height: 16px; font-size: 11.500px; letter-spacing: -.03px; }
```
